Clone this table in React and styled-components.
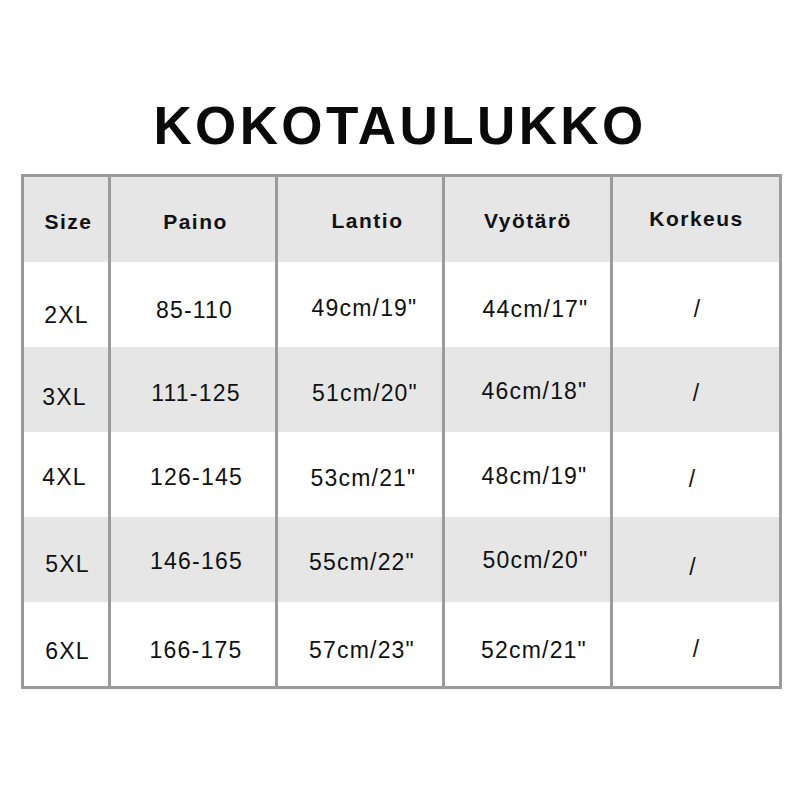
import React from 'react';
import styled, { createGlobalStyle } from 'styled-components';

const header = [
    ['Size', 2, 2.5],
    ['Paino', 2, 2.5],
    ['Lantio', 7, 1.5],
    ['Vyötärö', 0, 1.5],
    ['Korkeus', 0, -1],
];

// each cell: [text, dx, dy] - the source image has slightly uneven text placement
const rows = [
    [['2XL', 0, 11], ['85-110', 1, 5.5], ['49cm/19"', 4, 3.5], ['44cm/17"', 7.5, 5], ['/', 1, 5]],
    [['3XL', -2, 8], ['111-125', 2.5, 4], ['51cm/20"', 4.5, 3.5], ['46cm/18"', 6.5, 2], ['/', 0, 3.5]],
    [['4XL', -2, 2.5], ['126-145', 3, 2.5], ['53cm/21"', 3, 3.5], ['48cm/19"', 6.5, 2], ['/', -4, 5]],
    [['5XL', 1, 5], ['146-165', 3, 2], ['55cm/22"', 1.5, 2.5], ['50cm/20"', 7.5, 1], ['/', -3.5, 8]],
    [['6XL', 1, 7], ['166-175', 2.5, 6], ['57cm/23"', 1.5, 6.5], ['52cm/21"', 6, 6], ['/', 0, 5]],
];

const App = () => {
    return (
        <Page>
            <GlobalStyle />
            <Title>KOKOTAULUKKO</Title>
            <Table>
                {header.map(([text, dx, dy]) => (
                    <Cell key={text} $shaded $head $dx={dx} $dy={dy}>
                        {text}
                    </Cell>
                ))}
                {rows.map((row, r) =>
                    row.map(([text, dx, dy], c) => (
                        <Cell
                            key={`${r}-${c}`}
                            $shaded={r % 2 === 1}
                            $last={r === rows.length - 1}
                            $dx={dx}
                            $dy={dy}
                        >
                            {text}
                        </Cell>
                    ))
                )}
            </Table>
        </Page>
    );
};

const GlobalStyle = createGlobalStyle`
    html, body {
        margin: 0;
        padding: 0;
        background: #ffffff;
    }
`;

const Page = styled.div`
    width: 800px;
    height: 800px;
    padding-top: 99px;
    box-sizing: border-box;
    display: flex;
    flex-direction: column;
    align-items: center;
    font-family: "Liberation Sans", Arial, sans-serif;
    color: #111;
`;

const Title = styled.h1`
    margin: 0 0 22px;
    font-size: 53px;
    line-height: 53px;
    font-weight: bold;
    letter-spacing: 3.4px;
    color: #0a0a0a;
`;

const Table = styled.div`
    margin-left: 3px;
    display: grid;
    grid-template-columns: 84px 164px 164px 165px 166px;
    column-gap: 3px;
    border: 3px solid #9b9b9b;
    background: #9b9b9b;
`;

const Cell = styled.div`
    height: ${p => (p.$last ? 84 : 85)}px;
    box-sizing: border-box;
    display: flex;
    align-items: center;
    justify-content: center;
    background: ${p => (p.$shaded ? '#e6e6e6' : '#ffffff')};
    font-size: ${p => (p.$head ? 21 : 23)}px;
    font-weight: ${p => (p.$head ? 'bold' : 'normal')};
    letter-spacing: ${p => (p.$head ? 1.5 : 1.2)}px;
    white-space: nowrap;
    padding-left: ${p => Math.max(p.$dx, 0) * 2 + 1}px;
    padding-right: ${p => Math.max(-p.$dx, 0) * 2}px;
    padding-top: ${p => Math.max(p.$dy, 0) * 2}px;
    padding-bottom: ${p => Math.max(-p.$dy, 0) * 2}px;
`;

export default App;
